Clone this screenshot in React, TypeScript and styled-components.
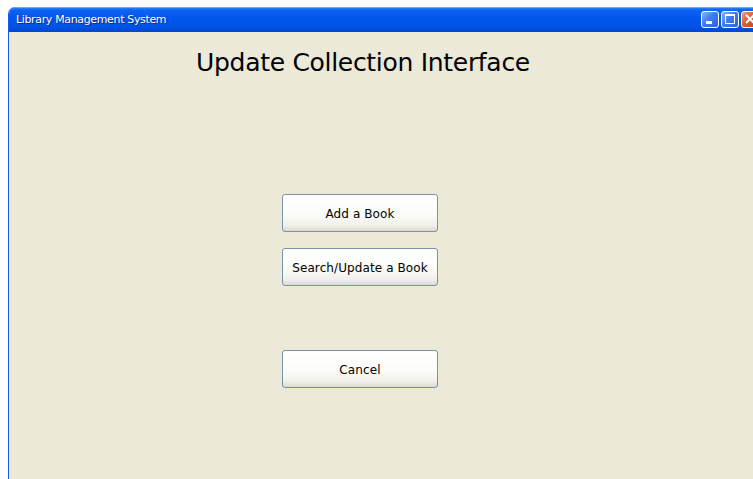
import styled, { createGlobalStyle } from 'styled-components';

const GlobalStyle = createGlobalStyle`
  html,
  body {
    margin: 0;
    padding: 0;
    background: #ffffff;
    overflow: hidden;
  }

  body {
    font-family: 'DejaVu Sans', Tahoma, sans-serif;
  }
`;

const Desktop = styled.div`
  width: 753px;
  height: 479px;
  padding: 7px 0 0 8px;
  box-sizing: border-box;
  overflow: hidden;
`;

const Window = styled.div`
  width: 760px;
  height: 480px;
  flex-shrink: 0;
  display: flex;
  flex-direction: column;
  border-left: 1px solid #1657f0;
  border-radius: 7px 7px 0 0;
  overflow: hidden;
`;

const TitleBar = styled.div`
  height: 25px;
  display: flex;
  align-items: center;
  justify-content: space-between;
  padding: 0 0 0 7px;
  background: linear-gradient(
    to bottom,
    #3a8cff 0%,
    #0f62f4 12%,
    #0055ea 45%,
    #0052e6 80%,
    #0046d0 100%
  );
  box-shadow: inset 0 1px 0 #6aa8ff;
`;

const Title = styled.span`
  color: #ffffff;
  font-size: 11px;
  letter-spacing: -0.35px;
  text-shadow: 1px 1px 0 #0a2f8a;
`;

const Controls = styled.div`
  display: flex;
  gap: 2px;
  padding-right: 10px;
`;

const ControlButton = styled.div<{ $close?: boolean }>`
  width: 18px;
  height: 17px;
  box-sizing: border-box;
  border: 1px solid #ffffff;
  border-radius: 3px;
  display: flex;
  align-items: center;
  justify-content: center;
  background: ${(p) =>
    p.$close
      ? 'linear-gradient(135deg, #f0a080 0%, #e05a30 45%, #c8401e 100%)'
      : 'linear-gradient(135deg, #8cb4ff 0%, #3d7cf5 45%, #2a64e0 100%)'};
`;

const Panel = styled.div`
  flex: 1;
  display: flex;
  flex-direction: column;
  align-items: flex-start;
  background: #ece9d8;
`;

const Heading = styled.h1`
  margin: 14px 0 0 187px;
  font-size: 25px;
  font-weight: normal;
  color: #000000;
  letter-spacing: -0.3px;
  line-height: 34px;
`;

const ButtonStack = styled.div`
  margin: 114px 0 0 273px;
  display: flex;
  flex-direction: column;
  gap: 16px;
`;

const Gap = styled.div`
  height: 32px;
`;

const ActionButton = styled.button`
  width: 156px;
  height: 38px;
  padding: 2px 0 0;
  border: 1px solid #7892ae;
  border-radius: 3px;
  background: linear-gradient(
    to bottom,
    #ffffff 0%,
    #fbfbf8 55%,
    #f0efe9 85%,
    #dcd9cf 100%
  );
  font-family: 'DejaVu Sans', Tahoma, sans-serif;
  font-size: 12px;
  letter-spacing: 0.1px;
  color: #000000;
  cursor: pointer;
`;

export default function App() {
  return (
    <>
      <GlobalStyle />
      <Desktop>
        <Window>
          <TitleBar>
            <Title>Library Management System</Title>
            <Controls>
              <ControlButton>
                <svg width="16" height="15" viewBox="0 0 16 15">
                  <rect x="4" y="9" width="6" height="3" fill="#ffffff" />
                </svg>
              </ControlButton>
              <ControlButton>
                <svg width="16" height="15" viewBox="0 0 16 15">
                  <rect x="3.5" y="2.5" width="9" height="9" fill="none" stroke="#ffffff" />
                  <rect x="3" y="2" width="10" height="2" fill="#ffffff" />
                </svg>
              </ControlButton>
              <ControlButton $close>
                <svg width="16" height="15" viewBox="0 0 16 15">
                  <path d="M4 3 L12 11 M12 3 L4 11" stroke="#ffffff" strokeWidth="2" />
                </svg>
              </ControlButton>
            </Controls>
          </TitleBar>
          <Panel>
            <Heading>Update Collection Interface</Heading>
            <ButtonStack>
              <ActionButton>Add a Book</ActionButton>
              <ActionButton>Search/Update a Book</ActionButton>
              <Gap />
              <ActionButton>Cancel</ActionButton>
            </ButtonStack>
          </Panel>
        </Window>
      </Desktop>
    </>
  );
}
